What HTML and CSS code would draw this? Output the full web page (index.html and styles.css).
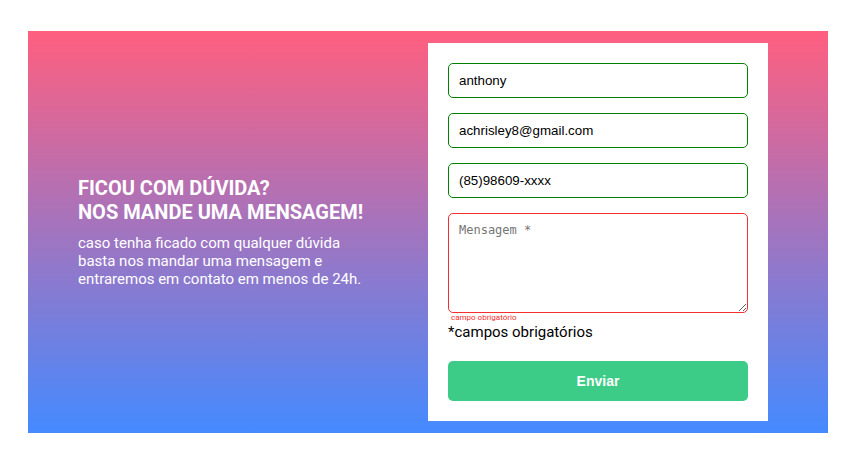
FILE: index.html
```html
<!DOCTYPE html>
<html lang="pt-BR">
<head>
<meta charset="utf-8">
<meta name="viewport" content="width=device-width, initial-scale=1">
<title>Contato</title>
<link rel="stylesheet" href="styles.css">
</head>
<body>
<main class="contact">
  <section class="intro">
    <h1 class="title">FICOU COM DÚVIDA?<br>NOS MANDE UMA MENSAGEM!</h1>
    <p class="text">caso tenha ficado com qualquer dúvida basta nos mandar uma mensagem e entraremos em contato em menos de 24h.</p>
  </section>
  <form class="form">
    <input class="field" type="text" aria-label="Nome" value="anthony">
    <input class="field" type="email" aria-label="E-mail" value="achrisley8@gmail.com">
    <input class="field" type="tel" aria-label="Telefone" value="(85)98609-xxxx">
    <textarea class="field message" aria-label="Mensagem" placeholder="Mensagem *"></textarea>
    <span class="error">campo obrigatório</span>
    <p class="note">*campos obrigatórios</p>
    <button class="submit" type="submit">Enviar</button>
  </form>
</main>
</body>
</html>
```

FILE: styles.css
```css
* {
  box-sizing: border-box;
  margin: 0;
  padding: 0;
}

body {
  min-height: 100vh;
  padding: 0 29px 0 28px;
  display: flex;
  align-items: center;
  justify-content: center;
  background: #fff;
  font-family: Roboto, sans-serif;
}

.contact {
  width: 100%;
  max-width: 800px;
  padding: 12px 60px 12px 50px;
  display: flex;
  align-items: center;
  justify-content: space-between;
  background: linear-gradient(#ff5f7f, #448aff);
}

.intro {
  width: 290px;
  color: #fff;
}

.title {
  margin-bottom: 10px;
  font-size: 20px;
  line-height: 24px;
  font-weight: 700;
  white-space: nowrap;
}

.text {
  font-size: 15px;
  line-height: 18px;
}

.form {
  width: 340px;
  padding: 20px;
  display: flex;
  flex-direction: column;
  background: #fff;
}

.field {
  width: 100%;
  height: 35px;
  margin-bottom: 15px;
  padding: 10px;
  border: 1px solid green;
  border-radius: 5px;
  background: #fff;
  color: #000;
  font-family: "Liberation Sans", Arial, sans-serif;
}

.message {
  height: 100px;
  margin-bottom: 0;
  padding-top: 9px;
  border-color: #f52f2f;
  font-family: "DejaVu Sans Mono", monospace;
  font-size: 12px;
}

.error {
  padding-left: 3px;
  color: #f52f2f;
  font-size: 8px;
  line-height: 10px;
}

.note {
  margin-bottom: 20px;
  font-size: 15px;
  line-height: 18px;
}

.submit {
  height: 40px;
  border: 0;
  border-radius: 5px;
  background: #3dcc87;
  color: #fff;
  font-family: "Liberation Sans", Arial, sans-serif;
  font-size: 14px;
  font-weight: 700;
}
```
